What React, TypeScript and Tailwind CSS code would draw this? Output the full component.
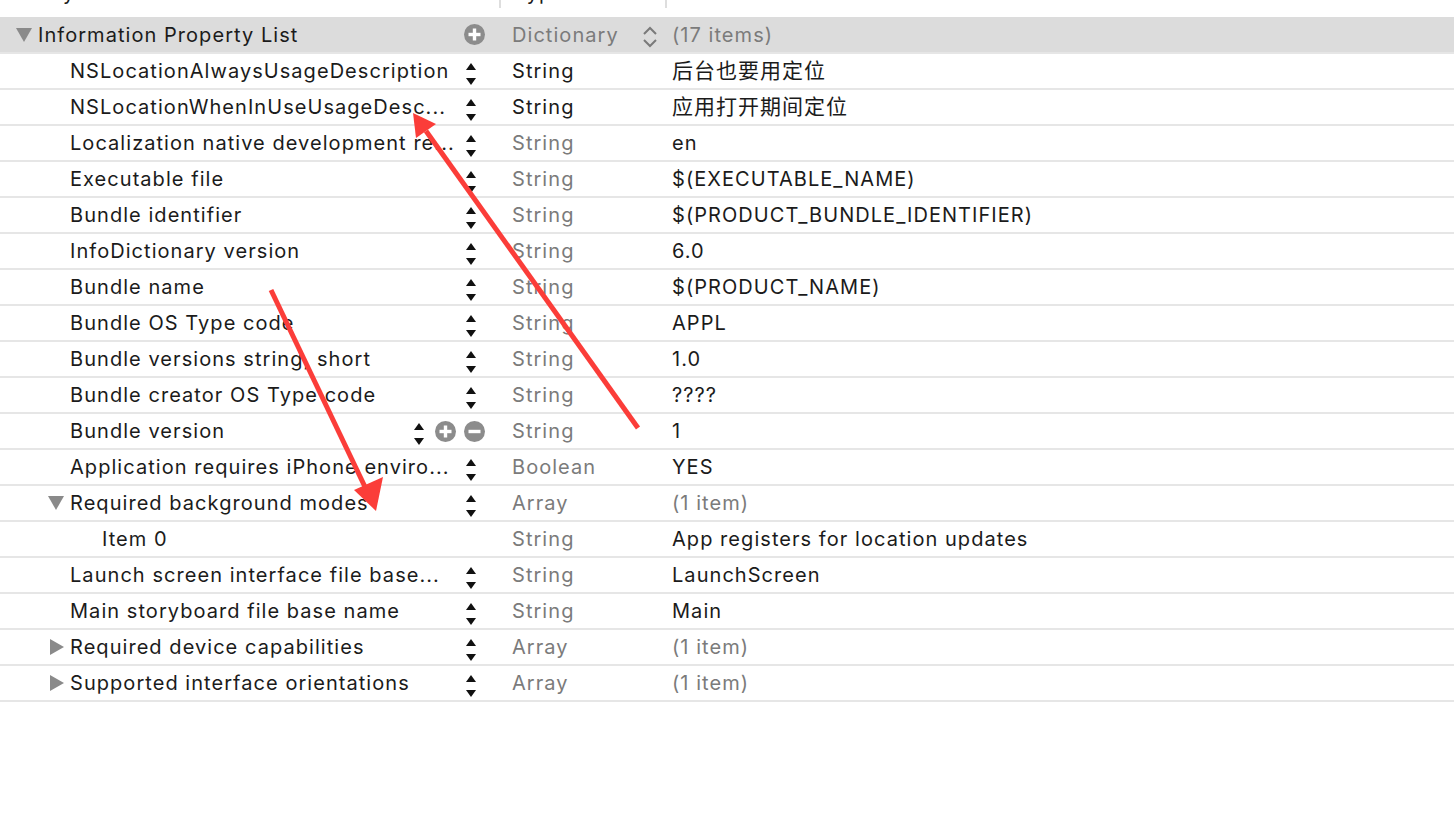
type Row = {
	key: string;
	level: number;
	disclosure?: "down" | "right";
	type: string;
	typeDark?: boolean;
	value: string;
	valueGray?: boolean;
	cjk?: boolean;
	controls?: "stepper" | "none" | "edit";
};

const rows: Row[] = [
	{ key: "NSLocationAlwaysUsageDescription", level: 1, type: "String", typeDark: true, value: "后台也要用定位", cjk: true },
	{ key: "NSLocationWhenInUseUsageDesc...", level: 1, type: "String", typeDark: true, value: "应用打开期间定位", cjk: true },
	{ key: "Localization native development re...", level: 1, type: "String", value: "en" },
	{ key: "Executable file", level: 1, type: "String", value: "$(EXECUTABLE_NAME)" },
	{ key: "Bundle identifier", level: 1, type: "String", value: "$(PRODUCT_BUNDLE_IDENTIFIER)" },
	{ key: "InfoDictionary version", level: 1, type: "String", value: "6.0" },
	{ key: "Bundle name", level: 1, type: "String", value: "$(PRODUCT_NAME)" },
	{ key: "Bundle OS Type code", level: 1, type: "String", value: "APPL" },
	{ key: "Bundle versions string, short", level: 1, type: "String", value: "1.0" },
	{ key: "Bundle creator OS Type code", level: 1, type: "String", value: "????" },
	{ key: "Bundle version", level: 1, type: "String", value: "1", controls: "edit" },
	{ key: "Application requires iPhone enviro...", level: 1, type: "Boolean", value: "YES" },
	{ key: "Required background modes", level: 1, disclosure: "down", type: "Array", value: "(1 item)", valueGray: true },
	{ key: "Item 0", level: 2, type: "String", value: "App registers for location updates", controls: "none" },
	{ key: "Launch screen interface file base...", level: 1, type: "String", value: "LaunchScreen" },
	{ key: "Main storyboard file base name", level: 1, type: "String", value: "Main" },
	{ key: "Required device capabilities", level: 1, disclosure: "right", type: "Array", value: "(1 item)", valueGray: true },
	{ key: "Supported interface orientations", level: 1, disclosure: "right", type: "Array", value: "(1 item)", valueGray: true },
];

const Stepper = () => (
	<svg width="10" height="24" viewBox="0 0 10 24" className="mt-[6px] shrink-0">
		<polygon points="5,1 10,8 0,8" fill="#111" />
		<polygon points="0,16 10,16 5,23" fill="#111" />
	</svg>
);

const CircleBtn = ({ minus }: { minus?: boolean }) => (
	<svg width="21" height="21" viewBox="0 0 21 21" className="shrink-0">
		<circle cx="10.5" cy="10.5" r="10.5" fill="#8c8c8c" />
		<rect x="4.5" y="8.8" width="12" height="3.4" fill="#fff" />
		{!minus && <rect x="8.8" y="4.5" width="3.4" height="12" fill="#fff" />}
	</svg>
);

const Triangle = ({ dir }: { dir: "down" | "right" }) =>
	dir === "down" ? (
		<svg width="16" height="14" viewBox="0 0 16 14">
			<polygon points="0,0 16,0 8,14" fill="#8a8a8a" />
		</svg>
	) : (
		<svg width="14" height="16" viewBox="0 0 14 16" className="ml-[2px]">
			<polygon points="0,0 14,8 0,16" fill="#8a8a8a" />
		</svg>
	);

const indentClass = ["pl-[16px]", "pl-[48px]", "pl-[80px]"];

const App = () => {
	return (
		<div
			className="relative w-[1454px] h-[830px] overflow-hidden bg-white text-[20px] tracking-[1.05px] text-[#1b1b1b]"
			style={{ fontFamily: '"Inter", "Noto Sans CJK SC", sans-serif' }}
		>
			{/* Column header, cut off at the top */}
			<div className="h-[17px] overflow-hidden">
				<div className="flex h-[36px] -mt-[25px] items-center">
					<div className="w-[499px] pl-[37px]">Key</div>
					<div className="w-[166px] pl-[13px] border-l-2 border-[#dedede]">Type</div>
					<div className="pl-[7px] border-l-2 border-[#dedede]">Value</div>
				</div>
			</div>

			{/* Root row */}
			<div className="flex h-[37px] items-center bg-[#dcdcdc] border-b-2 border-[#e6e6e6]">
				<div className="w-[499px] flex items-center pl-[16px]">
					<div className="w-[22px] flex items-center">
						<Triangle dir="down" />
					</div>
					<span className="flex-1">Information Property List</span>
					<div className="mr-[14px] flex items-center">
						<CircleBtn />
					</div>
				</div>
				<div className="w-[166px] flex items-center pl-[13px] text-[#7b7b7b]">
					<span className="flex-1">Dictionary</span>
					<svg width="16" height="24" viewBox="0 0 16 24" className="mr-[7px] mt-[4px]">
						<polyline points="2,9 8,3 14,9" fill="none" stroke="#7a7a7a" strokeWidth="2" />
						<polyline points="2,15 8,21 14,15" fill="none" stroke="#7a7a7a" strokeWidth="2" />
					</svg>
				</div>
				<div className="pl-[7px] text-[#7b7b7b]">(17 items)</div>
			</div>

			{rows.map((r) => (
				<div key={r.key} className="flex h-[36px] items-center border-b-2 border-[#e6e6e6]">
					<div className={`w-[499px] flex items-center ${indentClass[r.level]}`}>
						<div className="w-[22px] flex items-center">
							{r.disclosure && <Triangle dir={r.disclosure} />}
						</div>
						<span className="flex-1 whitespace-nowrap">{r.key}</span>
						{r.controls === "edit" ? (
							<div className="flex items-center gap-[8px] mr-[14px]">
								<div className="mr-[3px] flex">
									<Stepper />
								</div>
								<CircleBtn />
								<CircleBtn minus />
							</div>
						) : r.controls === "none" ? null : (
							<div className="mr-[23px] flex">
								<Stepper />
							</div>
						)}
					</div>
					<div className={`w-[166px] pl-[13px] ${r.typeDark ? "text-[#1b1b1b]" : "text-[#7b7b7b]"}`}>
						{r.type}
					</div>
					<div
						className={`pl-[7px] whitespace-nowrap ${r.valueGray ? "text-[#7b7b7b]" : ""} ${
							r.cjk ? "text-[21px] tracking-[1px]" : ""
						}`}
					>
						{r.value}
					</div>
				</div>
			))}

			{/* Red annotation arrows */}
			<svg className="absolute left-0 top-0 pointer-events-none" width="1454" height="830">
				<line x1="638" y1="428" x2="426" y2="131" stroke="#fb3d39" strokeWidth="5" />
				<polygon points="413,113 436,124 416,138" fill="#fb3d39" />
				<line x1="271" y1="290" x2="366" y2="489" stroke="#fb3d39" strokeWidth="5" />
				<polygon points="376,511 354,490 383,477" fill="#fb3d39" />
			</svg>
		</div>
	);
};

export default App;
